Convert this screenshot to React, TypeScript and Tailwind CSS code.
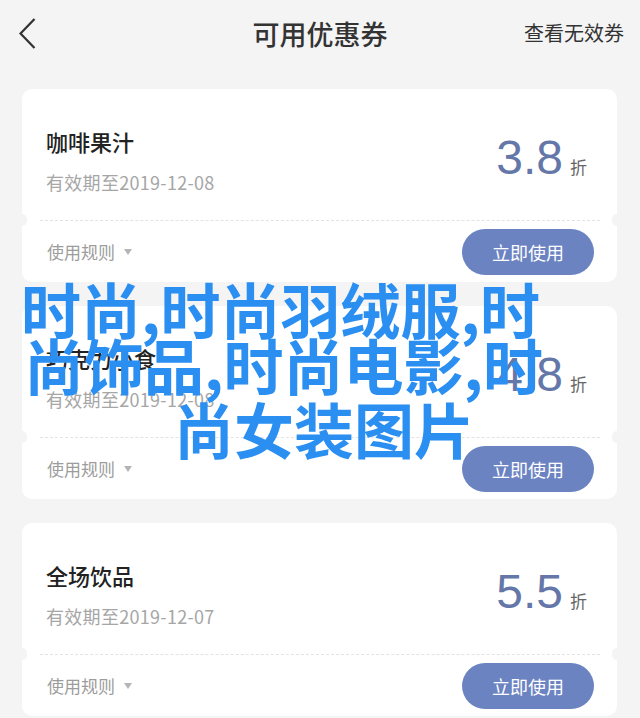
import React from "react";

const CJK = { fontFamily: '"Noto Sans CJK SC", "Noto Sans", sans-serif' };
const NUM = { fontFamily: '"Liberation Sans", Arial, sans-serif' };

type Coupon = { name: string; date: string; value: string };

const coupons: Coupon[] = [
  { name: "咖啡果汁", date: "有效期至2019-12-08", value: "3.8" },
  { name: "巧克力小食", date: "有效期至2019-12-08", value: "4.8" },
  { name: "全场饮品", date: "有效期至2019-12-07", value: "5.5" },
];

function Card({ c }: { c: Coupon }) {
  return (
    <div className="relative ml-[22px] mr-[23px] h-[193px] shrink-0 rounded-[10px] bg-white flex flex-col">
      <div className="h-[131px] flex justify-between pl-[24px] pr-[30px]">
        <div className="pt-[38px]">
          <div className="text-[22px] leading-[28px] text-[#222] font-medium">{c.name}</div>
          <div className="mt-[15px] text-[18px] leading-[24px] text-[#a6a6a6] tracking-[0.3px]">{c.date}</div>
        </div>
        <div className="pt-[45px] flex items-baseline">
          <span style={NUM} className="text-[48px] leading-none text-[#6577a8]">{c.value}</span>
          <span className="ml-[7px] text-[17px] leading-none text-[#666]">折</span>
        </div>
      </div>
      <div className="ml-[18px] mr-[17px] border-t border-dashed border-[#e3e3e3]" />
      <div className="flex-1 flex items-center justify-between pl-[25px] pr-[23px]">
        <div className="flex items-center">
          <span className="text-[17px] leading-[24px] text-[#9c9c9c]">使用规则</span>
          <svg width="8" height="6" viewBox="0 0 8 6" className="ml-[9px]">
            <path d="M0 0 L8 0 L4 6 Z" fill="#b5b5b5" />
          </svg>
        </div>
        <button className="w-[132px] h-[46px] rounded-full bg-[#6c83c2] text-white text-[18px] leading-none">
          立即使用
        </button>
      </div>
      <div className="absolute left-[-5px] top-[125px] w-[10px] h-[12px] rounded-full bg-[#f4f4f4]" />
      <div className="absolute right-[-5px] top-[125px] w-[10px] h-[12px] rounded-full bg-[#f4f4f4]" />
    </div>
  );
}

export default function App() {
  return (
    <div style={CJK} className="relative w-[640px] h-[718px] overflow-hidden bg-[#f4f4f4]">
      <div className="h-[66px] grid grid-cols-[1fr_auto_1fr] items-center">
        <div className="pl-[19px] flex items-center">
          <svg width="17" height="31" viewBox="0 0 17 31">
            <path d="M15.5 1 L1.5 15.5 L15.5 30" fill="none" stroke="#333" strokeWidth="2.3" />
          </svg>
        </div>
        <div className="text-[27px] leading-none text-[#333] font-medium">可用优惠券</div>
        <div className="flex justify-end pr-[16px] text-[20px] leading-none text-[#333]">查看无效券</div>
      </div>
      <div className="pt-[23px] flex flex-col gap-[24px]">
        {coupons.map((c) => (
          <Card key={c.name} c={c} />
        ))}
      </div>
      <div className="pointer-events-none absolute left-0 right-0 top-[278px] text-[60px] leading-[60px] font-bold text-[#2b8ff2] whitespace-nowrap">
        <div className="h-[56px] pl-[21px]">时尚,时尚羽绒服,时</div>
        <div className="h-[64px] pl-[24px]">尚饰品,时尚电影,时</div>
        <div className="pl-[174px]">尚女装图片</div>
      </div>
    </div>
  );
}
